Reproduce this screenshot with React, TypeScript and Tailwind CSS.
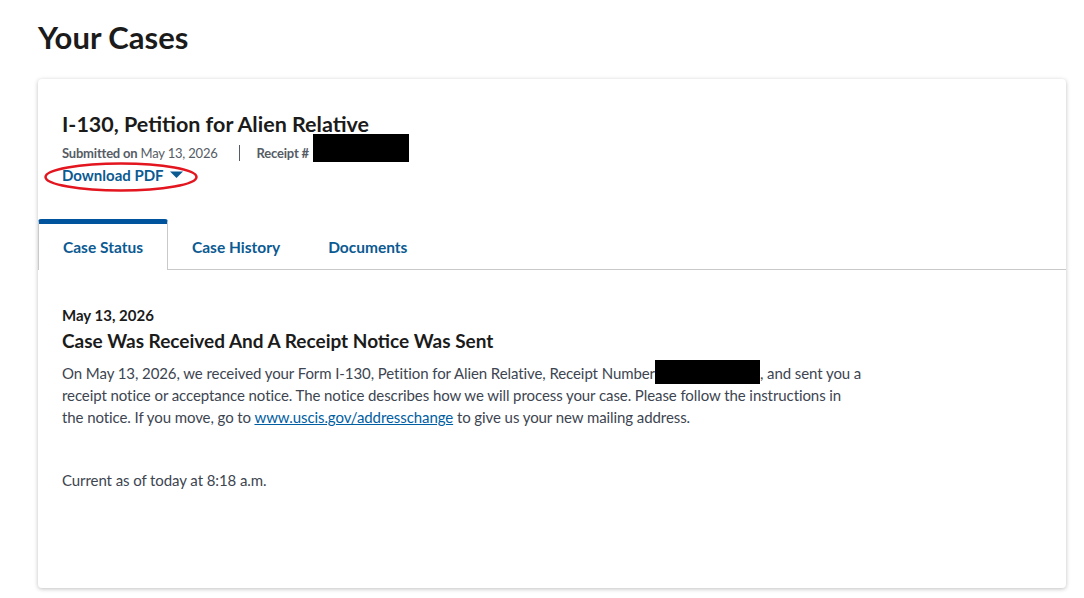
import React from 'react';

const font = { fontFamily: '"Source Sans Pro", Lato, "Liberation Sans", sans-serif' };

const App: React.FC = () => {
  return (
    <div className="min-h-screen bg-white pl-[38px] pr-[18px] pt-[19px] pb-[10px]" style={font}>
      <h1 className="text-[31px] leading-[36px] font-bold text-[#1b1b1b]">Your Cases</h1>

      {/* Card del caso */}
      <div className="mt-[24px] bg-white rounded-[4px] shadow-[0_1px_4px_rgba(0,0,0,0.25)] h-[509px]">
        <div className="px-6 pt-[30px]">
          <h2 className="text-[21.5px] leading-[30px] font-bold text-[#1b1b1b]">
            I-130, Petition for Alien Relative
          </h2>
          <div className="mt-[4px] flex items-center text-[13px] tracking-[-0.2px] leading-[20px] text-[#565c65]">
            <span>
              <strong className="font-bold">Submitted on</strong> May 13, 2026
            </span>
            <span className="ml-[21px] mr-[17px] h-[16px] w-px bg-[#565c65]" />
            <span className="relative">
              <strong className="font-bold">Receipt #</strong>
              <span className="absolute left-[56px] top-[-9px] h-[28px] w-[96px] bg-black" />
            </span>
          </div>
          <div className="relative inline-block">
            <button className="flex items-center gap-[6px] text-[15px] leading-[22px] font-bold text-[#0b5a92]">
              Download PDF
              <svg width="13" height="8" viewBox="0 0 13 8">
                <path d="M0 0.5 L13 0.5 L6.5 7 Z" fill="#0b5a92" />
              </svg>
            </button>
            <svg
              className="absolute left-[-19px] top-[-3px] pointer-events-none"
              width="156"
              height="32"
              viewBox="0 0 156 32"
            >
              <ellipse cx="78" cy="16" rx="75.5" ry="13.5" fill="none" stroke="#e3151f" strokeWidth="2.5" />
            </svg>
          </div>
        </div>

        {/* Tabs */}
        <div className="mt-[32px] flex border-b border-[#c9c9c9] h-[51px]">
          <div className="-mb-px h-[51px] border-t-[5px] border-x border-t-[#00549d] border-x-[#c9c9c9] rounded-t-[3px] bg-white px-6 pt-[1px] flex items-center text-[15.5px] font-bold text-[#0b5a92]">
            Case Status
          </div>
          <div className="h-[50px] pt-[7px] px-6 flex items-center text-[15.5px] font-bold text-[#0b5a92]">
            Case History
          </div>
          <div className="h-[50px] pt-[7px] px-6 flex items-center text-[15.5px] font-bold text-[#0b5a92]">
            Documents
          </div>
        </div>

        {/* Contenido del estado */}
        <div className="px-6 pt-[35px]">
          <p className="text-[15px] leading-[20px] font-bold text-[#1b1b1b]">May 13, 2026</p>
          <h3 className="mt-[1px] text-[19px] leading-[30px] font-bold text-[#1b1b1b]">
            Case Was Received And A Receipt Notice Was Sent
          </h3>
          <p className="mt-[4px] max-w-[802px] text-[15px] tracking-[-0.08px] leading-[22px] text-[#3d4551]">
            On May 13, 2026, we received your Form I-130, Petition for Alien Relative, Receipt Number
            <span className="inline-block align-[-5px] h-[24px] w-[105px] bg-black" />, and sent you a
            receipt notice or acceptance notice. The notice describes how we will process your case. Please follow the
            instructions in the notice. If you move, go to{' '}
            <a href="#" className="text-[#005ea2] underline">www.uscis.gov/addresschange</a> to give us your new
            mailing address.
          </p>
          <p className="mt-[41px] text-[15px] tracking-[-0.08px] leading-[22px] text-[#3d4551]">
            Current as of today at 8:18 a.m.
          </p>
        </div>
      </div>
    </div>
  );
};

export default App;
